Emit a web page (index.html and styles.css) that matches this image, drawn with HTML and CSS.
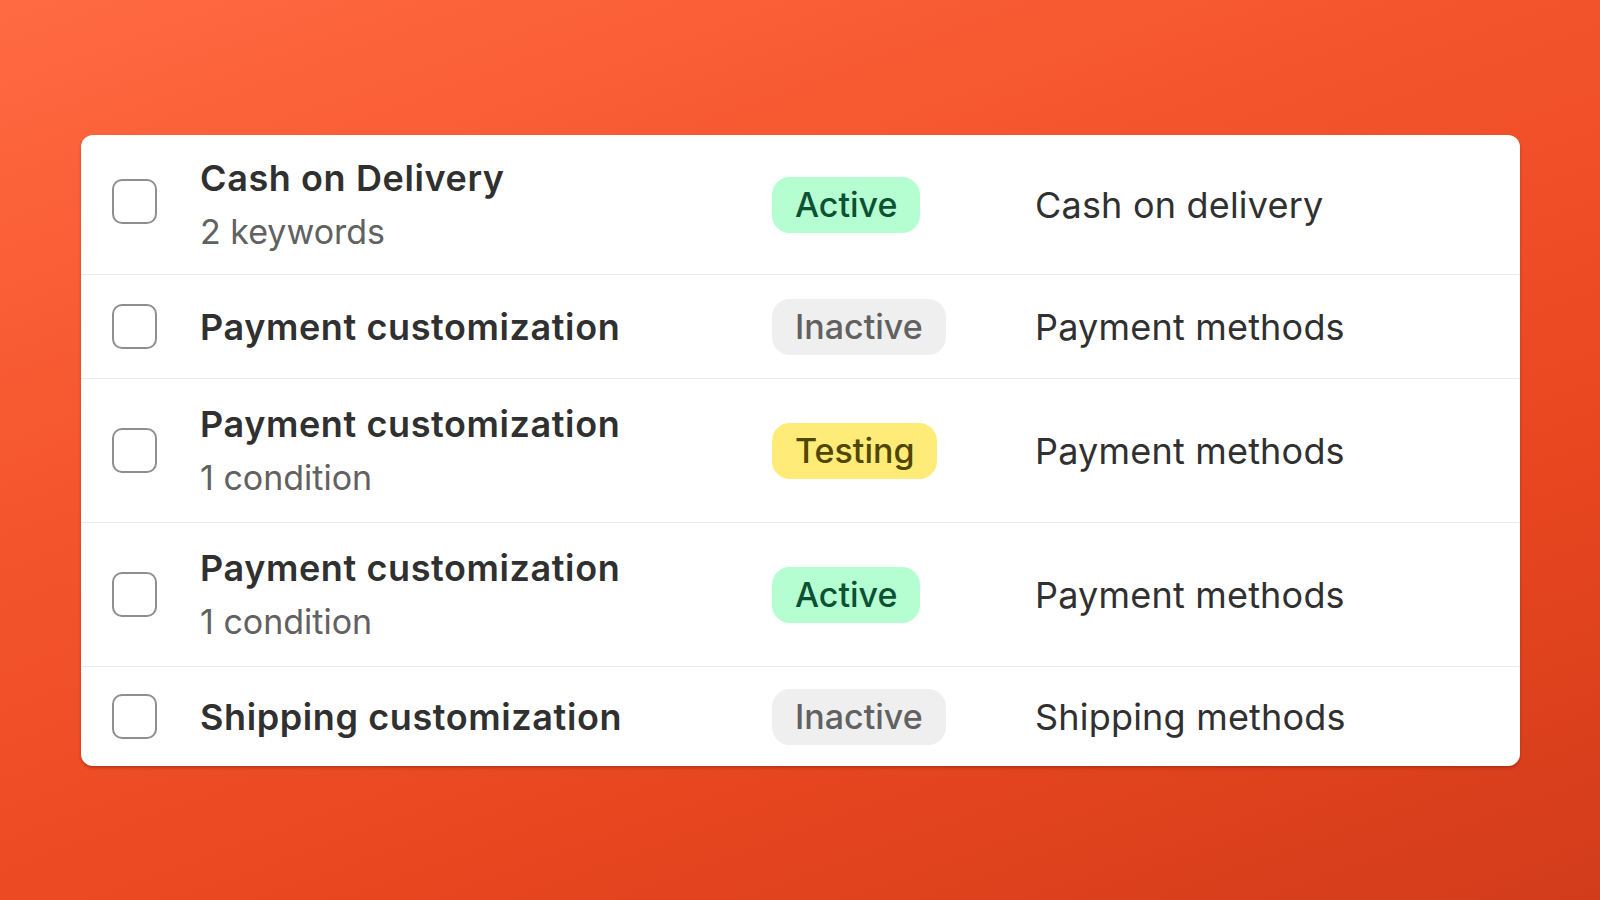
FILE: index.html
```html
<!DOCTYPE html>
<html lang="en">
<head>
<meta charset="utf-8">
<title>Customizations</title>
<link rel="stylesheet" href="styles.css">
</head>
<body>
<main class="stage">
  <section class="card">
    <div class="row row--first row--two">
      <span class="check"></span>
      <div class="name">
        <div class="title">Cash on Delivery</div>
        <div class="sub">2 keywords</div>
      </div>
      <div class="status"><span class="badge badge--active">Active</span></div>
      <div class="type">Cash on delivery</div>
    </div>
    <div class="row">
      <span class="check"></span>
      <div class="name">
        <div class="title">Payment customization</div>
      </div>
      <div class="status"><span class="badge badge--inactive">Inactive</span></div>
      <div class="type">Payment methods</div>
    </div>
    <div class="row row--two">
      <span class="check"></span>
      <div class="name">
        <div class="title">Payment customization</div>
        <div class="sub">1 condition</div>
      </div>
      <div class="status"><span class="badge badge--testing">Testing</span></div>
      <div class="type">Payment methods</div>
    </div>
    <div class="row row--two">
      <span class="check"></span>
      <div class="name">
        <div class="title">Payment customization</div>
        <div class="sub">1 condition</div>
      </div>
      <div class="status"><span class="badge badge--active">Active</span></div>
      <div class="type">Payment methods</div>
    </div>
    <div class="row row--last">
      <span class="check"></span>
      <div class="name">
        <div class="title">Shipping customization</div>
      </div>
      <div class="status"><span class="badge badge--inactive">Inactive</span></div>
      <div class="type">Shipping methods</div>
    </div>
  </section>
</main>
</body>
</html>
```

FILE: styles.css
```css
* { box-sizing: border-box; }
html, body { margin: 0; padding: 0; }
body {
  width: 1600px;
  height: 900px;
  overflow: hidden;
  font-family: Inter, "Noto Sans", "Liberation Sans", sans-serif;
  background: linear-gradient(160deg, #ff6a42 0%, #f5552c 35%, #e8461f 70%, #d23c1b 100%);
}
.stage {
  padding: 135px 80px 0 81px;
}
.card {
  width: 1439px;
  background: #ffffff;
  border-radius: 12px;
  box-shadow: 0 2px 3px rgba(90, 20, 0, 0.35);
  overflow: hidden;
}
.row {
  display: grid;
  grid-template-columns: 88px 572px 263px 1fr;
  align-items: center;
  padding-left: 31px;
  min-height: 104px;
  border-top: 1px solid #ebebeb;
}
.row--two { min-height: 144px; }
.row--first { border-top: none; min-height: 139px; }
.row--first .check { margin-top: -6px; }
.row--last { min-height: 100px; }
.check {
  width: 45px;
  height: 45px;
  border: 2px solid #8f8f8f;
  border-radius: 10px;
  background: #fff;
}
.name { display: flex; flex-direction: column; }
.title {
  font-size: 36px;
  line-height: 54px;
  font-weight: 600;
  letter-spacing: 0.6px;
  color: #303030;
}
.sub {
  font-size: 34px;
  line-height: 54px;
  font-weight: 400;
  color: #616161;
}
.status { display: flex; }
.badge {
  display: inline-flex;
  align-items: center;
  height: 56px;
  padding: 0 23px;
  border-radius: 18px;
  font-size: 34px;
  font-weight: 450;
}
.badge--active { background: #b4fed2; color: #0c5132; }
.badge--inactive { background: #efefef; color: #616161; }
.badge--testing { background: #ffeb78; color: #4f4700; }
.type {
  font-size: 36px;
  font-weight: 400;
  letter-spacing: 0.2px;
  color: #303030;
}
```
